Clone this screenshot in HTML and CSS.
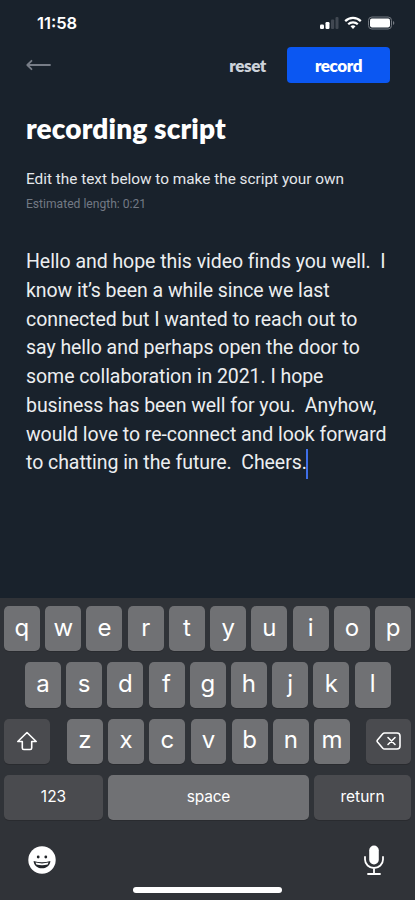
FILE: index.html
```html
<!DOCTYPE html>
<html lang="en">
<head>
  <meta charset="UTF-8" />
  <meta name="viewport" content="width=device-width, initial-scale=1.0" />
  <title>Recording Script</title>
  <link rel="stylesheet" href="styles.css">
</head>
<body>
  <div class="screen">
    <div class="status-bar">
      <span class="time">11:58</span>
      <svg class="status-icons" width="76" height="16" viewBox="0 0 76 16">
        <rect x="1" y="9.5" width="4" height="4.5" rx="1.2" fill="#fff" />
        <rect x="6.5" y="7" width="4" height="7" rx="1.2" fill="#fff" />
        <rect x="12" y="4.5" width="3.2" height="9.5" rx="1" fill="#414852" />
        <rect x="16.5" y="2" width="3" height="12" rx="1" fill="#414852" />
        <g fill="none" stroke="#fff" stroke-width="2.2">
          <path d="M26.2 6.1a11 11 0 0 1 15.6 0" />
          <path d="M29.2 9.3a6.8 6.8 0 0 1 9.6 0" />
        </g>
        <path d="M34 14l-2.5-2.7a3.7 3.7 0 0 1 5 0z" fill="#fff" />
        <rect x="49.5" y="2" width="23" height="12" rx="3.4" fill="none" stroke="#737981" />
        <rect x="51" y="3.6" width="20" height="8.8" rx="1.8" fill="#fff" />
        <path d="M74 6v4c1.8-.8 1.8-3.2 0-4z" fill="#737981" />
      </svg>
    </div>

    <div class="toolbar">
      <button class="btn-back" aria-label="Back">
        <svg width="26" height="12" viewBox="0 0 26 12" fill="none" stroke="#777d87" stroke-width="1.8" stroke-linecap="round" stroke-linejoin="round">
          <path d="M24 6H1.5M5.5 1.8L1.3 6l4.2 4.2" />
        </svg>
      </button>
      <button class="btn-reset">reset</button>
      <button class="btn-record">record</button>
    </div>

    <div class="content">
      <h1>recording script</h1>
      <p class="hint">Edit the text below to make the script your own</p>
      <p class="length">Estimated length: 0:21</p>
      <div class="script">Hello and hope this video finds you well.  I
know it’s been a while since we last
connected but I wanted to reach out to
say hello and perhaps open the door to
some collaboration in 2021. I hope
business has been well for you.  Anyhow,
would love to re-connect and look forward
to chatting in the future.  Cheers.<span class="caret"></span></div>
    </div>

    <div class="keyboard">
      <div class="row">
        <div class="key">q</div><div class="key">w</div><div class="key">e</div><div class="key">r</div><div class="key">t</div><div class="key">y</div><div class="key">u</div><div class="key">i</div><div class="key">o</div><div class="key">p</div>
      </div>
      <div class="row row-middle">
        <div class="key">a</div><div class="key">s</div><div class="key">d</div><div class="key">f</div><div class="key">g</div><div class="key">h</div><div class="key">j</div><div class="key">k</div><div class="key">l</div>
      </div>
      <div class="row row-bottom">
        <div class="key dark shift">
          <svg width="22" height="20" viewBox="0 0 22 20" fill="none" stroke="#fff" stroke-width="1.6" stroke-linejoin="round">
            <path d="M11 1.5L1.8 10.5H6.3V17q0 1.5 1.5 1.5h6.4q1.5 0 1.5-1.5V10.5H20.2z" />
          </svg>
        </div>
        <div class="letters">
          <div class="key">z</div><div class="key">x</div><div class="key">c</div><div class="key">v</div><div class="key">b</div><div class="key">n</div><div class="key">m</div>
        </div>
        <div class="key dark delete">
          <svg width="26" height="20" viewBox="0 0 26 20" fill="none" stroke="#fff" stroke-width="1.6" stroke-linejoin="round" stroke-linecap="round">
            <path d="M8.5 2H21q3 0 3 3v10q0 3-3 3H8.5q-1 0-1.700-.8L1.500 11q-.8-1 0-2L6.800 2.800Q7.500 2 8.500 2z" />
            <path d="M12 6.500l7 7M19 6.500l-7 7" />
          </svg>
        </div>
      </div>
      <div class="row">
        <div class="key dark word numbers">123</div>
        <div class="key word space">space</div>
        <div class="key dark word return">return</div>
      </div>
      <div class="keyboard-footer">
        <svg width="28" height="28" viewBox="0 0 28 28">
          <circle cx="14" cy="14" r="13.7" fill="#fff" />
          <circle cx="10.2" cy="11" r="1.4" fill="#222529" />
          <circle cx="17.8" cy="11" r="1.4" fill="#222529" />
          <path d="M5.6 15q8.400 2.600 16.800 0c-.7 9.800-16.100 9.800-16.800 0z" fill="#222529" />
          <path d="M7.500 16.600q6.500 1.600 13 0l-.8 1.900q-5.700 1.300-11.400 0z" fill="#fff" />
        </svg>
        <svg width="20" height="30" viewBox="0 0 20 30" fill="none" stroke="#fff" stroke-width="1.8" stroke-linecap="round">
          <rect x="5.2" y="0.5" width="9.6" height="19" rx="4.8" fill="#fff" stroke="none" />
          <path d="M1 12v2.500a9 8.500 0 0 0 18 0V12M10 23v5.500M4 29h12" />
        </svg>
      </div>
      <div class="home-indicator"></div>
    </div>
  </div>
</body>
</html>
```
FILE: styles.css
```css
* {
  box-sizing: border-box;
}
body {
  margin: 0;
  background-color: #19222c;
  color: #fff;
  font-family: Roboto, sans-serif;
}
.screen {
  width: 415px;
  height: 900px;
  display: flex;
  flex-direction: column;
  overflow: hidden;
}
.status-bar {
  height: 47px;
  padding: 15px 20px 0 37px;
  display: flex;
  justify-content: space-between;
  align-items: flex-start;
}
.time {
  font-family: Inter, sans-serif;
  font-size: 16.5px;
  line-height: 17px;
  font-weight: 600;
}
.toolbar {
  height: 36px;
  padding: 0 25px 0 26px;
  display: flex;
  align-items: center;
}
button {
  padding: 0;
  border: none;
  background: none;
  color: white;
  font-family: Lato, sans-serif;
  font-size: 17px;
  font-weight: 800;
  letter-spacing: -0.4px;
  cursor: pointer;
}
.btn-back {
  display: flex;
  margin-right: auto;
}
.btn-reset {
  color: #cdd2da;
  margin-right: 21px;
}
.btn-record {
  width: 103px;
  height: 36px;
  border-radius: 4px;
  background-color: #0b57f2;
}
.content {
  flex: 1;
  padding: 28px 20px 0 26px;
}
h1 {
  margin: 0;
  font-family: Lato, sans-serif;
  font-size: 28px;
  line-height: 34px;
  font-weight: 800;
  letter-spacing: 0.15px;
}
.hint {
  margin: 24px 0 0;
  font-size: 15.35px;
  line-height: 20px;
  color: #e4e7eb;
}
.length {
  margin: 7px 0 0;
  font-size: 12.1px;
  line-height: 16px;
  color: #727984;
}
.script {
  margin-top: 36px;
  font-size: 19.5px;
  line-height: 28.75px;
  letter-spacing: -0.05px;
  white-space: pre;
  color: #eceef0;
}
.caret {
  display: inline-block;
  width: 2px;
  height: 30px;
  margin: -6px 0 -6px -1px;
  vertical-align: middle;
  background-color: #3f6fe8;
}
.keyboard {
  height: 302px;
  padding: 8px 4px 0;
  display: flex;
  flex-direction: column;
  gap: 11px;
  background-color: #303338;
}
.row {
  display: flex;
  gap: 5.3px;
}
.row-middle {
  padding: 0 20.5px 0 21px;
}
.row-bottom {
  justify-content: space-between;
}
.letters {
  width: 283px;
  margin-left: 1px;
  display: flex;
  gap: 5.3px;
}
.key {
  flex: 1;
  height: 45.3px;
  display: flex;
  align-items: center;
  justify-content: center;
  border-radius: 5px;
  background-color: #707174;
  box-shadow: 0 1px 0 #292b2f;
  font-family: Inter, sans-serif;
  font-size: 24px;
  padding-bottom: 3px;
}
.dark {
  background-color: #4a4b4f;
}
.shift, .delete {
  flex: none;
  width: 46px;
  padding-bottom: 0;
}
.delete {
  width: 45px;
}
.word {
  font-size: 15.5px;
  padding-bottom: 2px;
}
.space {
  letter-spacing: -0.2px;
}
.numbers {
  flex: none;
  width: 99px;
}
.return {
  flex: none;
  width: 97px;
}
.keyboard-footer {
  padding: 14px 27px 0 24px;
  display: flex;
  justify-content: space-between;
  align-items: center;
}
.home-indicator {
  width: 149px;
  height: 6px;
  margin-top: 1px;
  align-self: center;
  border-radius: 3px;
  background-color: #fff;
}
```
